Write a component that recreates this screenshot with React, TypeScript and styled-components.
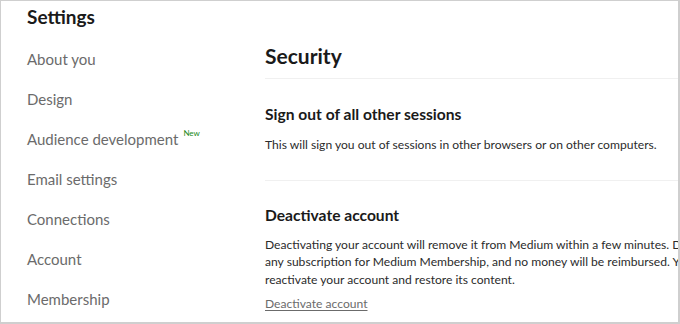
import React from "react";
import styled, { createGlobalStyle } from "styled-components";

const Global = createGlobalStyle`
  html, body { margin: 0; padding: 0; background: #fff; }
  body { font-family: Lato, "Noto Sans", sans-serif; -webkit-font-smoothing: antialiased; }
`;

const Frame = styled.div`
  box-sizing: border-box;
  width: 680px;
  height: 324px;
  border: 1px solid #cfcfcf;
  border-right-width: 2px;
  border-bottom-width: 2px;
  overflow: hidden;
  display: flex;
  background: #fff;
`;

const Sidebar = styled.nav`
  flex: 0 0 264px;
  padding-left: 26px;
  box-sizing: border-box;
  display: flex;
  flex-direction: column;
`;

const SideTitle = styled.h1`
  margin: 0;
  height: 38px;
  line-height: 32px;
  font-size: 19px;
  font-weight: 700;
  color: #1a1a1a;
`;

const SideItem = styled.a`
  display: flex;
  align-items: center;
  height: 40px;
  font-size: 15px;
  color: #6b6b6b;
  text-decoration: none;
  white-space: nowrap;
`;

const NewTag = styled.sup`
  font-size: 8px;
  color: #1a8917;
  margin-left: 5px;
  align-self: flex-start;
  margin-top: 10px;
  line-height: 1;
`;

const Main = styled.main`
  flex: 0 0 680px;
  display: flex;
  flex-direction: column;
  padding-top: 41px;
`;

const PageTitle = styled.h2`
  margin: 0;
  font-size: 21px;
  font-weight: 700;
  line-height: 27px;
  color: #1a1a1a;
  padding-bottom: 9px;
  border-bottom: 1px solid #f0f0f0;
`;

const Section = styled.section<{ $divider?: boolean }>`
  padding-top: ${(p) => (p.$divider ? "24px" : "23px")};
  padding-bottom: ${(p) => (p.$divider ? "26px" : "0")};
  border-bottom: ${(p) => (p.$divider ? "1px solid #f0f0f0" : "none")};
`;

const SectionTitle = styled.h3<{ $gap: number }>`
  margin: 0 0 ${(p) => p.$gap}px;
  font-size: 15.6px;
  font-weight: 700;
  line-height: 22px;
  color: #1a1a1a;
`;

const Text = styled.p`
  margin: 0;
  font-size: 12.1px;
  line-height: 17.5px;
  color: #2b2b2b;
  white-space: nowrap;
`;

const Link = styled.a`
  display: inline-block;
  margin-top: 8px;
  font-size: 12.1px;
  color: #6b6b6b;
  text-decoration: underline;
  text-underline-offset: 2px;
`;

const navItems = [
  "About you",
  "Design",
  "Audience development",
  "Email settings",
  "Connections",
  "Account",
  "Membership",
];

export default function App() {
  return (
    <>
      <Global />
      <Frame>
        <Sidebar>
          <SideTitle>Settings</SideTitle>
          {navItems.map((n) => (
            <SideItem key={n}>
              {n}
              {n === "Audience development" && <NewTag>New</NewTag>}
            </SideItem>
          ))}
        </Sidebar>
        <Main>
          <PageTitle>Security</PageTitle>
          <Section $divider>
            <SectionTitle $gap={11}>Sign out of all other sessions</SectionTitle>
            <Text>This will sign you out of sessions in other browsers or on other computers.</Text>
          </Section>
          <Section>
            <SectionTitle $gap={10}>Deactivate account</SectionTitle>
            <Text>
              Deactivating your account will remove it from Medium within a few minutes. Deactivation will also cancel
              <br />
              any subscription for Medium Membership, and no money will be reimbursed. You can sign back in anytime to
              <br />
              reactivate your account and restore its content.
            </Text>
            <Link>Deactivate account</Link>
          </Section>
        </Main>
      </Frame>
    </>
  );
}
